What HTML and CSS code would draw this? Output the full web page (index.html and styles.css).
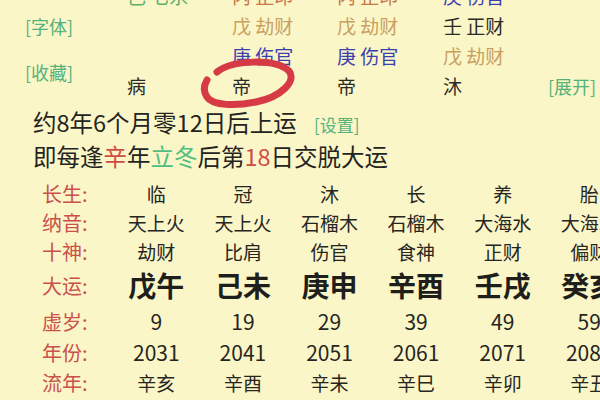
FILE: index.html
```html
<!DOCTYPE html>
<html lang="zh-CN">
<head>
    <meta charset="UTF-8">
    <meta name="viewport" content="width=device-width, initial-scale=1.0">
    <title>排盘 - 大运</title>
    <link rel="stylesheet" href="styles.css">
</head>
<body>
    <div class="page">
        <div class="pillars">
            <div class="side">
                <span class="link">[字体]</span>
                <span class="link">[收藏]</span>
            </div>

            <div class="cell green">己 七杀</div>
            <div class="cell brown">丙 正印</div>
            <div class="cell brown">丙 正印</div>
            <div class="cell blue">庚 伤官</div>
            <div class="cell"></div>

            <div class="cell"></div>
            <div class="cell tan">戊 劫财</div>
            <div class="cell tan">戊 劫财</div>
            <div class="cell">壬 正财</div>
            <div class="cell"></div>

            <div class="cell"></div>
            <div class="cell blue">庚 伤官</div>
            <div class="cell blue">庚 伤官</div>
            <div class="cell tan">戊 劫财</div>
            <div class="cell"></div>

            <div class="cell">病</div>
            <div class="cell">帝</div>
            <div class="cell">帝</div>
            <div class="cell">沐</div>
            <div class="cell more"><span class="link">[展开]</span></div>
        </div>

        <div class="start">
            <p>约8年6个月零12日后上运 <span class="link small">[设置]</span></p>
            <p>即每逢<span class="red">辛</span>年<span class="green2">立冬</span>后第<span class="red">18</span>日交脱大运</p>
        </div>

        <div class="dayun">
            <div class="row r1">
                <div class="label">长生:</div>
                <div>临</div><div>冠</div><div>沐</div><div>长</div><div>养</div><div>胎</div>
            </div>
            <div class="row r2">
                <div class="label">纳音:</div>
                <div>天上火</div><div>天上火</div><div>石榴木</div><div>石榴木</div><div>大海水</div><div>大海水</div>
            </div>
            <div class="row r3">
                <div class="label">十神:</div>
                <div>劫财</div><div>比肩</div><div>伤官</div><div>食神</div><div>正财</div><div>偏财</div>
            </div>
            <div class="row r4 big">
                <div class="label">大运:</div>
                <div>戊午</div><div>己未</div><div>庚申</div><div>辛酉</div><div>壬戌</div><div>癸亥</div>
            </div>
            <div class="row r5 num">
                <div class="label">虚岁:</div>
                <div>9</div><div>19</div><div>29</div><div>39</div><div>49</div><div>59</div>
            </div>
            <div class="row r6 num">
                <div class="label">年份:</div>
                <div>2031</div><div>2041</div><div>2051</div><div>2061</div><div>2071</div><div>2081</div>
            </div>
            <div class="row r7">
                <div class="label">流年:</div>
                <div>辛亥</div><div>辛酉</div><div>辛未</div><div>辛巳</div><div>辛卯</div><div>辛丑</div>
            </div>
        </div>

        <!-- hand drawn mark over the screenshot -->
        <svg class="mark" width="600" height="400" viewBox="0 0 600 400">
            <path d="M217 72 C232 60 275 58 289 71 C297 81 281 97 256 102 C236 106 213 106 207 97 C203 91 204 85 207 80"
                  fill="none" stroke="#d63a44" stroke-width="7" stroke-linecap="round"/>
        </svg>
    </div>
</body>
</html>
```

FILE: styles.css
```css
html, body {
    margin: 0;
    height: 100%;
    overflow: hidden;
}
body {
    background: #fbf6c8;
    font-family: "Noto Sans CJK SC", "Noto Sans", sans-serif;
    color: #2b2b26;
}
.page {
    position: relative;
    width: 600px;
    height: 400px;
    overflow: hidden;
}
p {
    margin: 0;
}

.pillars {
    display: grid;
    grid-template-columns: 127px 105px 105px 106px 105px 1fr;
    grid-auto-rows: 30px;
    margin-top: -19px;
    font-size: 19px;
}
.side {
    grid-column: 1;
    grid-row: 1 / 5;
    display: flex;
    flex-direction: column;
    align-items: flex-start;
    gap: 22px;
    padding: 33px 0 0 25px;
}
.cell {
    line-height: 30px;
    white-space: nowrap;
}
.more {
    text-align: right;
    padding-right: 8px;
}
.link {
    color: #55b27a;
    font-size: 18px;
    line-height: 24px;
}
.green { color: #5aaf6a; }
.brown { color: #c9784c; }
.tan { color: #c8a060; }
.blue { color: #3a3fae; }

.start {
    padding-left: 33px;
    font-size: 23.5px;
    line-height: 34px;
    margin-top: 4px;
    color: #24241e;
}
.start .small {
    margin-left: 12px;
    font-size: 17px;
}
.red { color: #cf4d47; }
.green2 { color: #4fbf80; }

.dayun {
    margin-top: 5px;
}
.row {
    display: grid;
    grid-template-columns: 113px repeat(6, 86.6px);
    align-items: center;
    font-size: 19px;
    text-align: center;
    white-space: nowrap;
    color: #26261f;
}
.row .label {
    text-align: left;
    padding-left: 42px;
    color: #c9504b;
    font-size: 20px;
}
.r1 { height: 30px; }
.r2 { height: 29px; }
.r3 { height: 28px; }
.r4 { height: 40px; }
.r5 { height: 32px; }
.r6 { height: 30px; }
.r7 { height: 30px; }
.big div {
    font-size: 28px;
    font-weight: bold;
    color: #1e1e1a;
}
.big .label {
    font-size: 20px;
    font-weight: 400;
    color: #c9504b;
}
.num div {
    font-size: 21px;
}
.num .label {
    font-size: 20px;
}

.mark {
    position: absolute;
    left: 0;
    top: 0;
    pointer-events: none;
}
```
